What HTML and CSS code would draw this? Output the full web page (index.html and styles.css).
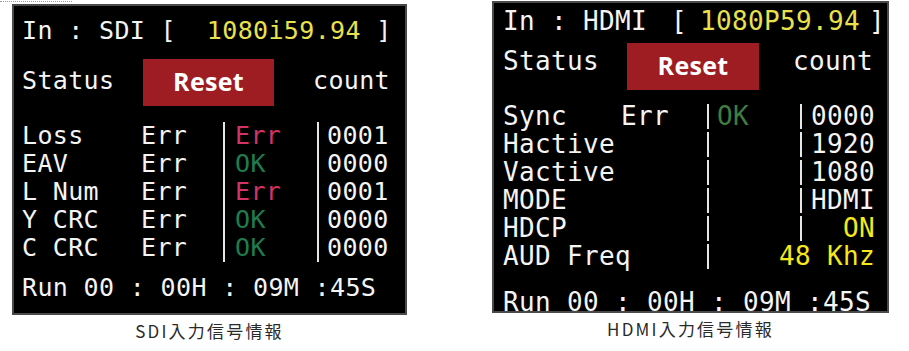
FILE: index.html
```html
<!DOCTYPE html>
<html lang="ja">
<head>
<meta charset="utf-8">
<title>入力信号情報</title>
<link rel="stylesheet" href="styles.css">
</head>
<body>
<div class="page">
  <span class="dots"></span>

  <figure class="fig fig-sdi">
    <div class="panel panel-sdi">
      <div class="line head">In : SDI [  <span class="yel">1080i59.94</span> ]</div>
      <div class="bar">
        <span class="lbl">Status</span>
        <span class="reset">Reset</span>
        <span class="cnt">count</span>
      </div>
      <div class="tbl">
        <span>Loss</span><span>Err</span><span class="cur red">Err</span><span class="num">0001</span>
        <span>EAV</span><span>Err</span><span class="cur grn">OK</span><span class="num">0000</span>
        <span>L Num</span><span>Err</span><span class="cur red">Err</span><span class="num">0001</span>
        <span>Y CRC</span><span>Err</span><span class="cur grn">OK</span><span class="num">0000</span>
        <span>C CRC</span><span>Err</span><span class="cur grn">OK</span><span class="num">0000</span>
      </div>
      <div class="line run">Run 00 : 00H : 09M :45S</div>
    </div>
    <figcaption class="cap">SDI入力信号情報</figcaption>
  </figure>

  <figure class="fig fig-hdmi">
    <div class="panel panel-hdmi">
      <div class="line head">In : HDMI<span class="lb">[</span><span class="yel fmt">1080P59.94</span><span class="rb">]</span></div>
      <div class="bar">
        <span class="lbl">Status</span>
        <span class="reset">Reset</span>
        <span class="cnt">count</span>
      </div>
      <div class="tbl">
        <span>Sync</span><span>Err</span><span class="cur grn2">OK</span><span class="num">0000</span>
        <span class="wide">Hactive</span><span class="cur"></span><span class="num">1920</span>
        <span class="wide">Vactive</span><span class="cur"></span><span class="num">1080</span>
        <span class="wide">MODE</span><span class="cur"></span><span class="num">HDMI</span>
        <span class="wide">HDCP</span><span class="cur"></span><span class="num ylw">ON</span>
        <span class="wide">AUD Freq</span><span class="cur span2 ylw">48 Khz</span>
      </div>
      <div class="line run">Run 00 : 00H : 09M :45S</div>
    </div>
    <figcaption class="cap">HDMI入力信号情報</figcaption>
  </figure>
</div>
</body>
</html>
```

FILE: styles.css
```css
* {
  box-sizing: border-box;
}

html,
body {
  margin: 0;
  background: #fff;
}

.page {
  position: relative;
  display: flex;
  align-items: flex-start;
  width: 909px;
  height: 351px;
  overflow: hidden;
}

/* dotted focus outline along the top-left edge */
.dots {
  position: absolute;
  left: 0;
  top: 1px;
  width: 72px;
  border-top: 1px dotted #9a9a9a;
}

.fig {
  margin: 0;
}

.fig-sdi {
  width: 395px;
  margin-left: 12px;
  margin-top: 4px;
}

.fig-hdmi {
  width: 397px;
  margin-left: 85px;
  margin-top: 1px;
}

/* the monitor screen */
.panel {
  background: #000;
  border: 2px solid #4a4a4a;
  color: #f4f4f4;
  font-family: "DejaVu Sans Mono", "Liberation Mono", monospace;
}

.panel .line,
.panel .tbl > span,
.panel .bar > span {
  white-space: pre;
}

.panel-sdi {
  height: 311px;
  padding: 11px 0 0 8px;
  font-size: 25px;
  letter-spacing: 0.35px;
}

.panel-hdmi {
  height: 312px;
  padding: 0 12px 0 9px;
  font-size: 26px;
  letter-spacing: 0.35px;
}

.line {
  line-height: 28px;
  height: 28px;
}

.yel {
  color: #e9e24e;
}

.ylw {
  color: #f6e81c;
}

.red {
  color: #d23467;
}

.grn {
  color: #1d7d4c;
}

.grn2 {
  color: #3f7d41;
}

/* input format brackets on the HDMI screen */
.lb {
  margin-left: 24px;
}

.fmt {
  margin-left: 13px;
}

.rb {
  margin-left: 9px;
}

/* Status / Reset / count */
.bar {
  display: grid;
  align-items: start;
  line-height: 28px;
}

.panel-sdi .bar {
  grid-template-columns: 121px 131px 1fr;
  margin-top: 14px;
}

.panel-hdmi .bar {
  grid-template-columns: 124px 132px 1fr;
  margin-top: 8px;
}

.lbl,
.cnt {
  margin-top: 8px;
}

.panel-hdmi .lbl,
.panel-hdmi .cnt {
  margin-top: 4px;
}

.panel-sdi .cnt {
  padding-left: 39px;
}

.panel-hdmi .cnt {
  padding-left: 34px;
}

.panel .reset {
  height: 47px;
  background: #9e1d23;
  color: #fff;
  font-family: "Open Sans", "Noto Sans", sans-serif;
  font-weight: 700;
  font-size: 25px;
  letter-spacing: 0.3px;
  line-height: 45px;
  text-align: center;
}

/* status table */
.tbl {
  display: grid;
}

.panel-sdi .tbl {
  grid-template-columns: 119px 82px 94px 1fr;
  grid-auto-rows: 28px;
  line-height: 28px;
  margin-top: 16px;
}

.panel-hdmi .tbl {
  grid-template-columns: 118px 86px 93px 1fr;
  grid-auto-rows: 25px;
  row-gap: 3px;
  line-height: 25px;
  margin-top: 14px;
}

.cur {
  border-left: 2px solid #e6e6e6;
}

.panel-sdi .cur {
  padding-left: 10px;
}

.panel-sdi .num {
  border-left: 2px solid #e6e6e6;
  padding-left: 8px;
}

.panel-hdmi .cur {
  padding-left: 8px;
}

.panel-hdmi .num {
  border-left: 2px solid #e6e6e6;
  text-align: right;
}

.wide {
  grid-column: span 2;
}

.span2 {
  grid-column: span 2;
  text-align: right;
}

.panel-sdi .run {
  margin-top: 12px;
}

.panel-hdmi .head {
  margin-top: 4px;
}

.panel-hdmi .run {
  margin-top: 19px;
}

/* caption under each screen */
.cap {
  margin-top: 6px;
  text-align: center;
  font-family: "Noto Sans CJK JP", "Noto Sans", sans-serif;
  font-size: 17px;
  line-height: 20px;
  letter-spacing: 2.2px;
  color: #2a2a2a;
}
```
